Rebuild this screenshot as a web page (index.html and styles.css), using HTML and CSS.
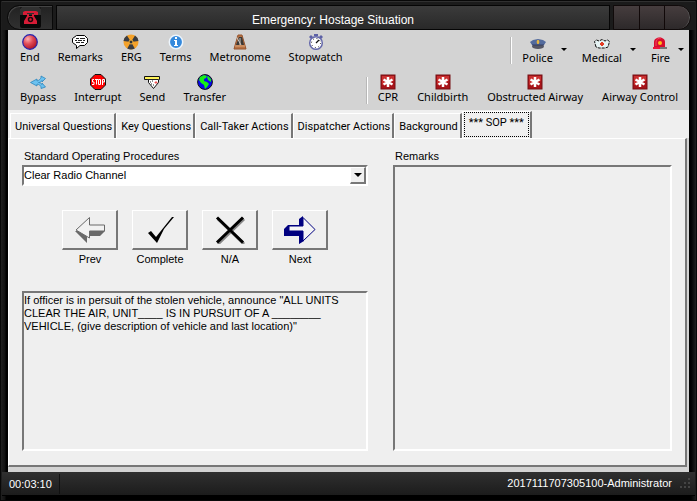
FILE: index.html
```html
<!DOCTYPE html>
<html lang="en">
<head>
<meta charset="utf-8">
<title>Emergency: Hostage Situation</title>
<link rel="stylesheet" href="styles.css">
</head>
<body>
<div class="window">
  <header class="titlebar">
    <div class="app-badge">
      <svg width="21" height="21" viewBox="0 0 21 21"><rect width="21" height="21" rx="2" fill="#080808"/><path d="M2 0h17l2 2v6H0V2z" fill="#303030"/><path d="M3 5l2-1h11l2 1v3h-4V6H7v2H3z" fill="#d61c36"/><path d="M7 7h2v2h3V7h2v2l3 5v3H4v-3l3-5z" fill="#d61c36"/><circle cx="10.500" cy="12.500" r="2" fill="none" stroke="#160a0c" stroke-width="1.500"/></svg>
    </div>
    <h1 class="title">Emergency: Hostage Situation</h1>
    <div class="window-controls">
      <button aria-label="Minimize"></button><button aria-label="Maximize"></button><button aria-label="Close"></button>
    </div>
  </header>

  <main class="body">
    <div class="toolbar">
      <div class="row">
        <div class="group">
          <button class="tool"><svg viewBox="0 0 16 16"><defs><radialGradient id="ball" cx=".35" cy=".3" r=".7"><stop offset="0" stop-color="#ffb0b0"/><stop offset=".5" stop-color="#e04a55"/><stop offset="1" stop-color="#b01828"/></radialGradient></defs><circle cx="8" cy="8" r="7.300" fill="url(#ball)" stroke="#2424b0" stroke-width="1.200"/></svg>End</button>
          <button class="tool"><svg viewBox="0 0 16 16"><path d="M4.500 1.500h8l3 3v4l-3 3H8l-3.500 3v-3L.500 8.500v-4z" fill="#fff" stroke="#000"/><path d="M4 4.500h3m1 0h5M3 6.500h2m1 0h4m1 0h2M4 8.500h4m1 0h3" stroke="#222"/></svg>Remarks</button>
          <button class="tool"><svg viewBox="0 0 16 16"><circle cx="8" cy="8" r="7.500" fill="#f4a22a"/><path d="M8 8L.500 7A7.500 7.500 0 0 1 4 1.500zM8 8l7.500-1A7.500 7.500 0 0 0 12 1.500zM8 8l-3.800 6.500a7.500 7.500 0 0 0 7.600 0z" fill="#393c42"/><circle cx="8" cy="8" r="2" fill="#333" stroke="#f6b33c"/></svg>ERG</button>
          <button class="tool"><svg viewBox="0 0 16 16"><circle cx="8" cy="8" r="6.700" fill="#3489dc" stroke="#edf5fd" stroke-width="1.500"/><path d="M7 3h2v2H7zM6 6h3v5h1v1H6v-1h1V7H6z" fill="#fff"/></svg>Terms</button>
          <button class="tool"><svg viewBox="0 0 16 16"><path d="M6 1h4l4 14H2z" fill="#b77345" stroke="#96552f"/><path d="M7 3h3l2 8H4z" fill="#3c3936"/><path d="M4 2l5 9M8 4v7" stroke="#c9c4be"/><path d="M3 12h10" stroke="#e1a679"/></svg>Metronome</button>
          <button class="tool"><svg viewBox="0 0 16 16"><path d="M6 0h4v2H6zM1 3l2-2 2 2-2 2zM11 3l2-2 2 2-2 2z" fill="#5c60a5"/><circle cx="8" cy="9" r="6.300" fill="#fff" stroke="#6468aa" stroke-width="1.500"/><path d="M8 9l3-3" stroke="#111" stroke-width="1.300"/><circle cx="8" cy="9" r="4.500" fill="none" stroke="#222" stroke-dasharray="1 2.530"/></svg>Stopwatch</button>
        </div>
        <div class="group services">
          <button class="tool menu"><svg viewBox="0 0 16 16"><ellipse cx="8" cy="11.500" rx="6" ry="2.500" fill="#555765"/><path d="M0 7l3-2 5-1 5 1 3 2-2 3H2z" fill="#536b9d"/><path d="M2 10h12" stroke="#343e63"/><path d="M8 5l1 2-1 2-1-2z" fill="#ffd34b" stroke="#e8b43a"/></svg>Police</button>
          <button class="tool menu"><svg viewBox="0 0 16 16"><path d="M2 12L.500 6.500l2-1.500L5 6l3-1.500L11 6l2.500-1 2 1.500L14 12l-3 1H5z" fill="#e6f3f4" stroke="#111" stroke-dasharray="3 1"/><path d="M8 7v4M6 9h4" stroke="#e43c25" stroke-width="2"/></svg>Medical</button>
          <button class="tool menu"><svg viewBox="0 0 16 16"><path d="M2 13V7c0-6 11-6 11 0v6z" fill="#d80d2e"/><path d="M4 11V7c0-3 3-4 5-4" fill="none" stroke="#f4435d"/><circle cx="8" cy="8" r="2" fill="#ffba17"/><path d="M1 12h8v2H1z" fill="#ec1539"/><path d="M8 12h7v2H8z" fill="#777"/></svg>Fire</button>
        </div>
      </div>
      <div class="row">
        <div class="group">
          <button class="tool"><svg viewBox="0 0 16 16"><path d="M.500 8.500L7 5v2c2-.500 3-2 4-3V2l4.500 2.500L12 8V6.500C11 8 10 8.500 8.500 8.500 10 8.500 11 9.500 12 10.500V9l3.500 4-4.500 1.500v-2C10 11.500 9 10.500 7 10v2z" fill="#6cc2f0" stroke="#2c85bd" stroke-width=".8"/></svg>Bypass</button>
          <button class="tool"><svg viewBox="0 0 16 16"><path d="M5 .500h6L15.500 5v6L11 15.500H5L.500 11V5z" fill="#f00" stroke="#111"/><path d="M4 5.500H2.500V8H4v2.500H2M5 5.500h3M6.500 5.500v5M8.500 5.500h2v5h-2zM12.500 11V5.500h2V8h-2" fill="none" stroke="#fff"/></svg>Interrupt</button>
          <button class="tool"><svg viewBox="0 0 16 16"><path d="M.500 2.500h15v3h-1v3l-5 6-5-6v-3h-4z" fill="#fff" stroke="#111"/><path d="M1 3h14v2H1z" fill="#fff45a"/><path d="M3 5.500h11M6 8h1m1-1h1M7 10h1m1 1h1" stroke="#222"/><path d="M12 7v3m-1.500-1.500h3" stroke="#e55"/></svg>Send</button>
          <button class="tool"><svg viewBox="0 0 16 16"><circle cx="8" cy="8" r="7.400" fill="#0808ef" stroke="#111"/><path d="M3 3l4-2 3 1-1 2-2 1v2l3 1 2 2-2 3-2 2-1-4-3-2-2-3zM11 2l3 3v3l-3-2-1-3z" fill="#16ef16"/></svg>Transfer</button>
        </div>
        <div class="group protocols">
          <button class="tool"><svg viewBox="0 0 16 16"><rect x="1" y="1" width="14" height="14" fill="#a81319" stroke="#761014"/><path d="M2 2h12v5L2 11z" fill="#ca3030"/><path d="M8 3v10M3.500 5.500l9 5M3.500 10.500l9-5" stroke="#fff" stroke-width="2.500"/></svg>CPR</button>
          <button class="tool"><svg viewBox="0 0 16 16"><rect x="1" y="1" width="14" height="14" fill="#a81319" stroke="#761014"/><path d="M2 2h12v5L2 11z" fill="#ca3030"/><path d="M8 3v10M3.500 5.500l9 5M3.500 10.500l9-5" stroke="#fff" stroke-width="2.500"/></svg>Childbirth</button>
          <button class="tool"><svg viewBox="0 0 16 16"><rect x="1" y="1" width="14" height="14" fill="#a81319" stroke="#761014"/><path d="M2 2h12v5L2 11z" fill="#ca3030"/><path d="M8 3v10M3.500 5.500l9 5M3.500 10.500l9-5" stroke="#fff" stroke-width="2.500"/></svg>Obstructed Airway</button>
          <button class="tool"><svg viewBox="0 0 16 16"><rect x="1" y="1" width="14" height="14" fill="#a81319" stroke="#761014"/><path d="M2 2h12v5L2 11z" fill="#ca3030"/><path d="M8 3v10M3.500 5.500l9 5M3.500 10.500l9-5" stroke="#fff" stroke-width="2.500"/></svg>Airway Control</button>
        </div>
      </div>
    </div>

    <div class="tabs" role="tablist">
      <button class="tab" role="tab">Universal Questions</button>
      <button class="tab" role="tab">Key Questions</button>
      <button class="tab" role="tab">Call-Taker Actions</button>
      <button class="tab" role="tab">Dispatcher Actions</button>
      <button class="tab" role="tab">Background</button>
      <button class="tab selected" role="tab" aria-selected="true"><span>*** SOP ***</span></button>
    </div>

    <section class="panel" role="tabpanel">
      <div class="column">
        <label for="procedure">Standard Operating Procedures</label>
        <div class="select-box">
          <select id="procedure"><option>Clear Radio Channel</option></select>
          <span class="drop" aria-hidden="true"></span>
        </div>
        <div class="steps">
          <div class="step">
            <button id="prev" aria-labelledby="prev-label"><svg viewBox="0 0 32 28"><path d="M1 15l12 12v-7h13l5-5z" fill="#696969"/><path d="M2 14L15.500 1.500V9h15v6h-15v7z" fill="#f2f2f2" stroke="#696969"/></svg></button>
            <label id="prev-label" for="prev">Prev</label>
          </div>
          <div class="step">
            <button id="complete" aria-labelledby="complete-label"><svg viewBox="0 0 32 28"><path d="M4 17l3-2 5 6L28 1h2L20 13l-7 14z"/></svg></button>
            <label id="complete-label" for="complete">Complete</label>
          </div>
          <div class="step">
            <button id="na" aria-labelledby="na-label"><svg viewBox="0 0 32 28"><path d="M4 3l26 25M30 3L4 28" stroke="#888" stroke-width="3"/><path d="M3 1.500l26 25M29 1.500L3 26.500" stroke="#000" stroke-width="3"/></svg></button>
            <label id="na-label" for="na">N/A</label>
          </div>
          <div class="step">
            <button id="next" aria-labelledby="next-label"><svg viewBox="0 0 32 28"><path d="M0 13l4-4h11V3l4-3v21l-4 7v-8H0z" fill="#000080"/><path d="M15 28l5-3v-9h-5z" fill="#000080"/><path d="M5 10h14V1.500L31 13.500 19 25V15H5z" fill="#f5f5f5" stroke="#000080"/></svg></button>
            <label id="next-label" for="next">Next</label>
          </div>
        </div>
        <textarea readonly aria-label="Procedure text">If officer is in persuit of the stolen vehicle, announce "ALL UNITS CLEAR THE AIR, UNIT____ IS IN PURSUIT OF A ________ VEHICLE, (give description of vehicle and last location)"</textarea>
      </div>
      <div class="column remarks">
        <label for="remarks">Remarks</label>
        <textarea id="remarks"></textarea>
      </div>
    </section>
  </main>

  <footer class="statusbar">
    <span class="elapsed">00:03:10</span>
    <span class="session">2017111707305100-Administrator</span>
    <svg class="grip" width="12" height="12" viewBox="0 0 12 12"><path d="M8 0h2v2H8zM4 4h2v2H4zM8 4h2v2H8zM0 8h2v2H0zM4 8h2v2H4zM8 8h2v2H8z" fill="#444"/></svg>
  </footer>
</div>
</body>
</html>
```
FILE: styles.css
```css
* { box-sizing: border-box; }

body {
  margin: 0;
  background: #000;
  color: #000;
  font: 12px/13px "Liberation Sans", Arial, sans-serif;
}

button, select, textarea {
  margin: 0;
  border: 0;
  border-radius: 0;
  padding: 0;
  background: none;
  color: inherit;
  font: inherit;
}

.window {
  display: flex;
  flex-direction: column;
  min-height: 100vh;
  border: 1px solid #080808;
  padding: 0 1px 4px;
  background: linear-gradient(90deg, #202020, #111 4px, #000 5px, #000 calc(100% - 5px), #202020);
}

.titlebar {
  display: flex;
  gap: 3px;
  height: 29px;
  padding: 3px 4px 0 5px;
  border-top: 1px solid #303030;
  background: #1b1b1b;
}

.app-badge {
  display: flex;
  align-items: center;
  justify-content: center;
  width: 46px;
  border: 1px solid #080808;
  border-radius: 16px 0 0 16px;
  background: linear-gradient(#222, #303030);
  box-shadow: inset 1px 1px #444;
}

.title {
  flex: 1;
  margin: 0;
  border: 1px solid #050505;
  padding-top: 6px;
  background: linear-gradient(#3b3b3b, #292929);
  color: #fff;
  font-size: 12px;
  line-height: 16px;
  font-weight: 400;
  text-align: center;
}

.window-controls {
  display: flex;
  width: 78px;
  height: 25px;
  border: 1px solid #100a0a;
  border-radius: 0 14px 14px 0;
  background: linear-gradient(#463d3e, #2d292a);
  box-shadow: inset -1px 0 #555;
  overflow: hidden;
}

.window-controls button { flex: 1; }
.window-controls button + button { border-left: 1px solid #100808; }

.body {
  display: flex;
  flex: 1;
  flex-direction: column;
  margin: 0 6px;
  padding-bottom: 5px;
  background: #d3d3d3;
}

.toolbar {
  padding: 0 2px 0 3px;
  font: 11px/14px "Noto Sans", "Open Sans", sans-serif;
}

.row {
  display: flex;
  justify-content: space-between;
  height: 40px;
  padding-top: 4px;
}

.group { display: flex; align-items: flex-start; }

.services, .protocols {
  height: 27px;
  margin-top: 3px;
  border-left: 1px solid #b8b8b8;
  box-shadow: inset 1px 0 #fff;
  padding-left: 2px;
}

.services .tool { margin-top: -2px; }
.protocols .tool { margin-top: -3px; }
.protocols { gap: 1px; }
.services { margin-right: -3px; }

.tool {
  display: flex;
  flex-direction: column;
  align-items: center;
  padding: 0 9px;
  white-space: nowrap;
}

.tool svg { width: 16px; height: 16px; }

.menu { position: relative; padding-right: 20px; }

.menu::after {
  content: "";
  position: absolute;
  top: 13px;
  right: 6px;
  border: 3px solid transparent;
  border-top-color: #000;
  border-bottom: 0;
}

.tabs {
  display: flex;
  align-items: flex-end;
  height: 28px;
  padding: 0 2px;
  background: #efefef;
  font: 11px/13px Roboto, "Liberation Sans", sans-serif;
}

.tab {
  height: 25px;
  border: 1px solid #fff;
  border-right: 2px solid #777;
  border-bottom: 0;
  padding: 0 2px 0 4px;
  white-space: nowrap;
}

.selected {
  height: 27px;
  padding: 0 1px 3px;
}

.selected span { display: block; border: 1px dotted #000; padding: 3px 4px 7px; }

.panel {
  display: grid;
  grid-template-columns: 346fr 279fr;
  gap: 25px;
  flex: 1;
  margin-right: 2px;
  border: 1px solid #fff;
  border-right: 2px solid #777;
  border-bottom: 2px solid #777;
  padding: 11px 13px 14px;
  background: #efefef;
  font-size: 11px;
}

.column { display: flex; flex-direction: column; gap: 2px; min-width: 0; }
.column > label { padding-left: 2px; }

.select-box { position: relative; }

select {
  display: block;
  appearance: none;
  width: 100%;
  height: 21px;
  border: 2px solid #777;
  border-right-color: #fff;
  border-bottom-color: #fff;
  background: #fff;
}

.drop {
  position: absolute;
  top: 2px;
  right: 2px;
  width: 16px;
  height: 17px;
  border: 1px solid #fff;
  border-right: 2px solid #777;
  border-bottom: 2px solid #777;
  background: #efefef;
  pointer-events: none;
}

.drop::after {
  content: "";
  position: absolute;
  top: 5px;
  left: 3px;
  border: 4px solid transparent;
  border-top-color: #000;
  border-bottom: 0;
}

.steps { display: flex; gap: 14px; padding: 22px 0 23px 40px; }
.step { display: flex; flex-direction: column; align-items: center; gap: 3px; width: 56px; }

.step button {
  display: flex;
  align-items: center;
  justify-content: center;
  width: 56px;
  height: 40px;
  border: 1px solid #fff;
  border-right: 2px solid #777;
  border-bottom: 2px solid #777;
}

.step svg { width: 32px; height: 28px; }

textarea {
  display: block;
  flex: 1;
  width: 100%;
  border: 2px solid #777;
  border-right-color: #fff;
  border-bottom-color: #fff;
  padding: 1px 0;
  resize: none;
  overflow: hidden;
}

.statusbar {
  display: flex;
  align-items: center;
  height: 24px;
  border-bottom: 1px solid #000;
  padding-left: 7px;
  background: linear-gradient(#303030, #1c1c1c);
  color: #fff;
  font-size: 11px;
}

.elapsed { width: 51px; border-right: 1px solid #111; line-height: 20px; }
.session { margin-left: auto; padding-right: 8px; }
.grip { margin-right: 3px; }
```
